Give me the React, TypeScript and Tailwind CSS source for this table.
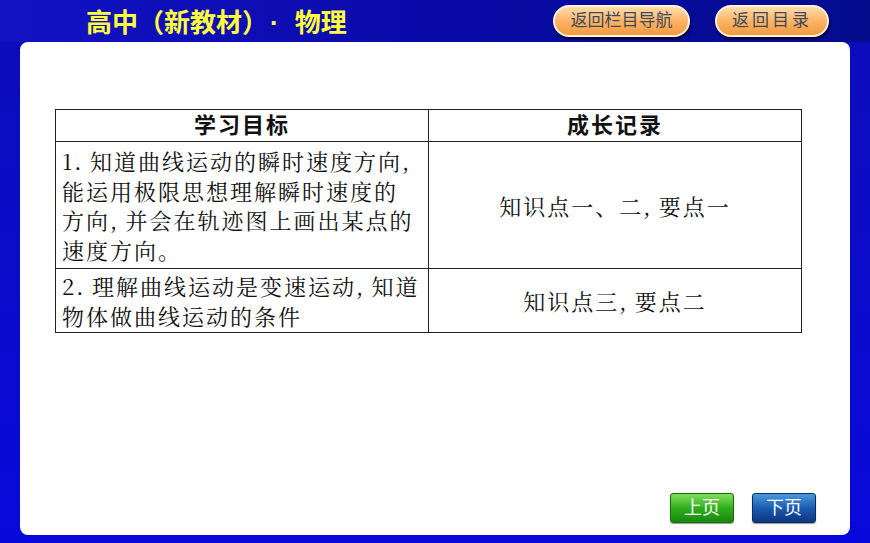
import React from 'react'

const serif = "'Noto Serif CJK SC', 'Liberation Serif', 'Noto Sans CJK SC', serif"
const sans = "'Liberation Sans', 'Noto Sans CJK SC', sans-serif"

function PillButton({ label, className }: { label: string; className?: string }) {
  return (
    <div
      className={`relative flex h-[32px] items-center justify-center rounded-full border-2 border-[#fff3e0] bg-gradient-to-b from-[#ffdcaa] via-[#fdb466] to-[#f39a3c] text-[17px] text-[#3c4a5c] shadow-[1px_3px_2px_rgba(0,0,20,0.6)] ${className ?? ''}`}
      style={{ fontFamily: sans }}
    >
      {label}
    </div>
  )
}

function PageButton({ label, green }: { label: string; green?: boolean }) {
  return (
    <div
      className={`flex h-[30px] w-[64px] items-center justify-center rounded-[3px] border text-[18px] text-white shadow-[0_1px_1px_rgba(0,0,0,0.4)] ${
        green
          ? 'border-[#1c6a10] bg-gradient-to-b from-[#7ee05a] via-[#2fae1c] to-[#178a0c]'
          : 'border-[#0a2a60] bg-gradient-to-b from-[#4a9ae0] via-[#1c5cb0] to-[#0c3680]'
      }`}
      style={{ fontFamily: sans }}
    >
      {label}
    </div>
  )
}

export default function App() {
  return (
    <div className="flex h-[543px] w-[870px] flex-col overflow-hidden bg-gradient-to-b from-[#0c0cb8] to-[#0808dc]">
      {/* Header */}
      <div className="flex h-[42px] items-center bg-gradient-to-r from-[#1212c4] via-[#0a0aa8] to-[#040c8c]">
        <div
          className="ml-[86px] flex items-center pt-[3px] text-[26px] font-bold leading-none text-[#ffff3c]"
          style={{ fontFamily: sans }}
        >
          <span>高中（新教材）</span>
          <span className="ml-[2px] mr-[16px]">·</span>
          <span>物理</span>
        </div>
        <div className="ml-auto mr-[41px] flex items-center gap-[25px] pb-[1px]">
          <PillButton label="返回栏目导航" className="w-[137px]" />
          <PillButton label="返回目录" className="w-[114px] tracking-[3px]" />
        </div>
      </div>

      {/* Panel */}
      <div className="mx-[20px] mb-[8px] flex flex-1 flex-col rounded-[8px] bg-white">
        <div className="pl-[35px] pt-[67px]">
          <table className="w-[747px] border-collapse text-[22px] text-[#111]" style={{ fontFamily: serif }}>
            <thead>
              <tr className="h-[32px]">
                <th
                  className="w-[373px] border border-[#222] text-[22px] font-bold leading-[30px] tracking-[2px]"
                  style={{ fontFamily: sans }}
                >
                  学习目标
                </th>
                <th
                  className="border border-[#222] text-[22px] font-bold leading-[30px] tracking-[2px]"
                  style={{ fontFamily: sans }}
                >
                  成长记录
                </th>
              </tr>
            </thead>
            <tbody>
              <tr className="h-[127px]">
                <td className="border border-[#222] px-[6px] align-middle leading-[29.5px] tracking-[2px]">
                  <div>1.{'\u2009'}知道曲线运动的瞬时速度方向,</div>
                  <div>能运用极限思想理解瞬时速度的</div>
                  <div>方向,{'\u2009'}并会在轨迹图上画出某点的</div>
                  <div>速度方向。</div>
                </td>
                <td className="border border-[#222] text-center align-middle tracking-[2px]">知识点一、二,{'\u2009'}要点一</td>
              </tr>
              <tr className="h-[64px]">
                <td className="border border-[#222] px-[6px] align-middle leading-[29.5px] tracking-[2px]">
                  <div>2.{'\u2009'}理解曲线运动是变速运动,{'\u2009'}知道</div>
                  <div>物体做曲线运动的条件</div>
                </td>
                <td className="border border-[#222] text-center align-middle tracking-[2px]">知识点三,{'\u2009'}要点二</td>
              </tr>
            </tbody>
          </table>
        </div>

        <div className="mt-auto flex justify-end gap-[18px] pb-[12px] pr-[34px]">
          <PageButton label="上页" green />
          <PageButton label="下页" />
        </div>
      </div>
    </div>
  )
}
